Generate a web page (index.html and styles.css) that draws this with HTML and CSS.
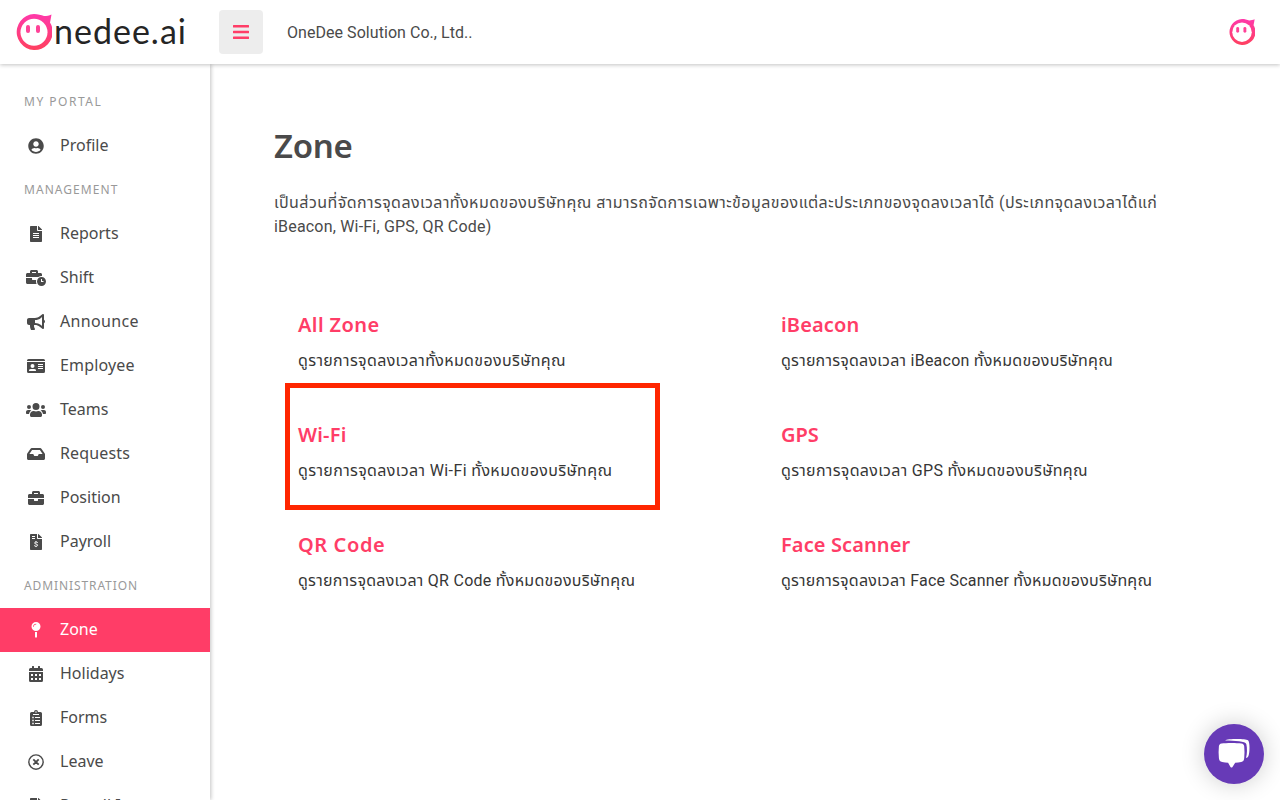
FILE: index.html
```html
<!DOCTYPE html>
<html lang="th">
<head>
<meta charset="utf-8">
<title>Zone</title>
<link rel="stylesheet" href="styles.css">
</head>
<body>
<svg class="defs" width="0" height="0">
  <defs>
    <linearGradient id="pink" x1="0" y1="0" x2="0" y2="1"><stop offset="0" stop-color="#ff39aa"/><stop offset="1" stop-color="#ff405f"/></linearGradient>
    <symbol id="mascot" viewBox="0 0 36 36">
      <path fill="url(#pink)" d="M18 0c4 0 7 1 10 2 3 0 5-.5 7.500-1.500-.5 3-.8 5-1.500 8A18 18 0 1 1 18 0z"/>
      <circle cx="18" cy="18.300" r="13.500" fill="#fff"/>
      <rect x="10" y="11" width="4" height="8" rx="2" fill="#ff4298"/><rect x="20" y="11" width="4" height="8" rx="2" fill="#ff4298"/>
    </symbol>
  </defs>
</svg>
<header class="topbar">
  <a class="logo"><svg class="logo-mark"><use href="#mascot"/></svg><span class="logo-text">nedee.ai</span></a>
  <button class="toggle"><svg width="16" height="14" viewBox="0 0 16 14"><path fill="#ff3d67" d="M.5 0h15q.5 0 .5.5v1.500q0 .5-.5.5H.5Q0 2.500 0 2V.5Q0 0 .5 0zM.5 5.700h15q.5 0 .5.5v1.500q0 .5-.5.5H.5Q0 8.200 0 7.700V6.200q0-.5.5-.5zM.5 11.400h15q.5 0 .5.5v1.500q0 .5-.5.5H.5q-.5 0-.5-.5v-1.500q0-.5.5-.5z"/></svg></button>
  <span class="company">OneDee Solution Co., Ltd..</span>
  <svg class="avatar"><use href="#mascot"/></svg>
</header>
<div class="shell">
  <nav class="sidebar">
    <h2 class="group g1">MY PORTAL</h2>
    <a class="item"><svg viewBox="0 0 496 512"><path d="M248 8C111 8 0 119 0 256s111 248 248 248 248-111 248-248S385 8 248 8zm0 96c48.600 0 88 39.400 88 88s-39.400 88-88 88-88-39.400-88-88 39.400-88 88-88zm0 344c-58.700 0-111.300-26.600-146.500-68.200 18.800-35.400 55.600-59.800 98.500-59.800 2.400 0 4.800.4 7.100 1.100 13 4.200 26.600 6.900 40.900 6.900s28-2.700 40.900-6.900c2.300-.7 4.700-1.100 7.100-1.100 42.900 0 79.700 24.400 98.500 59.800C359.300 421.400 306.700 448 248 448z"/></svg><span>Profile</span></a>
    <h2 class="group g2">MANAGEMENT</h2>
    <a class="item"><svg viewBox="0 0 384 512"><path d="M224 136V0H24C10.700 0 0 10.700 0 24v464c0 13.300 10.700 24 24 24h336c13.300 0 24-10.700 24-24V160H248c-13.200 0-24-10.800-24-24zm64 248H96v-32h192zm0-64H96v-32h192zm0-64H96v-32h192zm96-134v6H256V0h6c6 0 12 2 17 7l98 98c4 4 7 10 7 17z"/></svg><span>Reports</span></a>
    <a class="item"><svg viewBox="0 0 640 512"><path d="M496 224c-79.590 0-144 64.410-144 144s64.410 144 144 144 144-64.410 144-144-64.410-144-144-144zm64 150.290c0 5.340-4.370 9.710-9.710 9.710h-60.570c-5.340 0-9.710-4.370-9.710-9.710v-76.570c0-5.340 4.370-9.710 9.710-9.710h12.570c5.340 0 9.710 4.370 9.710 9.710V352h38.290c5.340 0 9.710 4.370 9.710 9.710zM496 192c5.400 0 10.720.33 16 .81V144c0-25.600-22.400-48-48-48h-80V48c0-25.600-22.400-48-48-48H176c-25.600 0-48 22.400-48 48v48H48c-25.600 0-48 22.400-48 48v80h395.120c28.600-20.090 63.350-32 100.880-32zM320 96H192V64h128zm6.820 224H208c-8.840 0-16-7.160-16-16v-48H0v144c0 25.600 22.400 48 48 48h291.430C327.100 423.960 320 396.820 320 368c0-16.660 2.480-32.720 6.820-48z"/></svg><span>Shift</span></a>
    <a class="item"><svg viewBox="0 0 576 512"><path d="M576 240c0-23.630-12.950-44.040-32-55.120V32.010C544 23.260 537.020 0 512 0c-7.120 0-14.190 2.380-19.980 7.020l-85.030 68.030C364.280 109.190 310.660 128 256 128H64c-35.350 0-64 28.650-64 64v96c0 35.350 28.650 64 64 64h33.700c-1.390 10.480-2.180 21.140-2.180 32 0 39.770 9.260 77.350 25.560 110.940 5.190 10.690 16.520 17.060 28.400 17.060h74.280c26.050 0 41.690-29.840 25.900-50.560-16.400-21.520-26.150-48.360-26.150-77.440 0-11.110 1.620-21.790 4.410-32H256c54.660 0 108.280 18.810 150.980 52.950l85.030 68.030a32 32 0 0 0 19.980 7.020c24.920 0 32-22.780 32-32V295.130C563.050 284.040 576 263.630 576 240zm-96 141.420l-33.050-26.440C392.950 311.780 325.120 288 256 288v-96c69.120 0 136.950-23.780 190.950-66.980L480 98.580z"/></svg><span class="w3">Announce</span></a>
    <a class="item"><svg viewBox="0 0 576 512"><path fill-rule="evenodd" d="M48 32h480q48 0 48 48v16H0V80q0-48 48-48zM0 128h576v304q0 48-48 48H48q-48 0-48-48zM176 192a64 64 0 1 0 0 128 64 64 0 1 0 0-128zM64 416h224v-19q0-45-67-45h-90q-67 0-67 45zM352 192h160v32H352zm0 64h160v32H352zm0 64h160v32H352z"/></svg><span class="w1">Employee</span></a>
    <a class="item"><svg viewBox="0 0 640 512"><path d="M96 224a64 64 0 1 0 0-128 64 64 0 0 0 0 128zm448 0a64 64 0 1 0 0-128 64 64 0 0 0 0 128zm32 32h-64c-17.600 0-33.500 7.100-45.100 18.600 40.300 22.100 68.900 62 75.100 109.400h66c17.700 0 32-14.300 32-32v-32c0-35.300-28.700-64-64-64zm-256 0a112 112 0 1 0 0-224 112 112 0 0 0 0 224zm76.800 32h-8.300c-42 21-95 21-137 0h-8.300C179.600 288 128 339.600 128 403.200V432c0 26.500 21.500 48 48 48h288c26.500 0 48-21.500 48-48v-28.800c0-63.600-51.600-115.200-115.200-115.200zm-223.700-13.400C161.500 263.100 145.600 256 128 256H64c-35.300 0-64 28.700-64 64v32c0 17.700 14.300 32 32 32h65.900c6.300-47.400 34.900-87.300 75.200-109.400z"/></svg><span>Teams</span></a>
    <a class="item"><svg viewBox="0 0 576 512"><path d="M567.900 243.900L462.200 85.400A48 48 0 0 0 422.300 64H153.700a48 48 0 0 0-40 21.400L8 243.900a48 48 0 0 0-8 26.600V400c0 26.500 21.500 48 48 48h480c26.500 0 48-21.500 48-48V270.500a48 48 0 0 0-8.100-26.600zM162.200 128h251.500l85.300 128H376l-32 64H232l-32-64H76.900z"/></svg><span class="w1">Requests</span></a>
    <a class="item"><svg viewBox="0 0 512 512"><path d="M320 336c0 8.840-7.160 16-16 16h-96c-8.840 0-16-7.160-16-16v-48H0v144c0 25.600 22.400 48 48 48h416c25.600 0 48-22.400 48-48V288H320zm144-208h-80V80c0-25.600-22.400-48-48-48H176c-25.600 0-48 22.400-48 48v48H48c-25.600 0-48 22.400-48 48v80h512v-80c0-25.600-22.400-48-48-48zm-144 0H192V96h128z"/></svg><span>Position</span></a>
    <a class="item"><svg viewBox="0 0 384 512"><path fill-rule="evenodd" d="M224 136V0H24Q0 0 0 24v464q0 24 24 24h336q24 0 24-24V160H248q-24 0-24-24zM64 64h96v32H64zm0 64h96v32H64zM384 122v6H256V0q15 0 23 7l98 98q7 7 7 17z"/><path d="M248 275c-32-26-101-25-101 14 0 46 96 19 96 67 0 43-70 46-108 14M192 228v34m0 122v34" fill="none" stroke="#fff" stroke-width="32"/></svg><span>Payroll</span></a>
    <h2 class="group g3">ADMINISTRATION</h2>
    <a class="item active"><svg viewBox="0 0 288 512"><path d="M112 316.940v156.690l22 33c4.750 7.120 15.220 7.120 20 0l22-33V316.940a176 176 0 0 1-64 0zM144 0a144 144 0 1 0 0 288 144 144 0 0 0 0-288zm0 76c-37.500 0-68 30.500-68 68 0 6.620-5.380 12-12 12s-12-5.380-12-12c0-50.730 41.280-92 92-92 6.620 0 12 5.380 12 12s-5.380 12-12 12z"/></svg><span>Zone</span></a>
    <a class="item"><svg viewBox="0 0 448 512"><path fill-rule="evenodd" d="M0 192h448v272q0 48-48 48H48q-48 0-48-48zM64 256v64h64v-64zm128 0v64h64v-64zm128 0v64h64v-64zM64 384v64h64v-64zm128 0v64h64v-64zm128 0v64h64v-64zM448 160H0v-48q0-48 48-48h48V12q0-12 12-12h40q12 0 12 12v52h128V12q0-12 12-12h40q12 0 12 12v52h48q48 0 48 48z"/></svg><span>Holidays</span></a>
    <a class="item"><svg viewBox="0 0 384 512"><path fill-rule="evenodd" d="M336 64h-80a64 64 0 0 0-128 0H48Q0 64 0 112v352q0 48 48 48h288q48 0 48-48V112q0-48-48-48zM192 40a24 24 0 1 1 0 48 24 24 0 0 1 0-48zM96 128h192v32H96zM72 216h48v48H72zm88 8h160v32H160zM72 312h48v48H72zm88 8h160v32H160zM72 408h48v48H72zm88 8h160v32H160z"/></svg><span>Forms</span></a>
    <a class="item"><svg viewBox="0 0 512 512"><g fill="none" stroke="#4a4a4a" stroke-width="46"><circle cx="256" cy="256" r="229"/><path stroke-width="58" d="M170 170l172 172m0-172L170 342"/></g></svg><span>Leave</span></a>
    <a class="item"><svg viewBox="0 0 384 512"><path d="M224 136V0H24Q0 0 0 24v464q0 24 24 24h336q24 0 24-24V160H248q-24 0-24-24zm160-14v6H256V0q15 0 23 7l98 98q7 7 7 17z"/></svg><span>Payroll Item</span></a>
  </nav>
  <main class="content">
    <h1>Zone</h1>
    <p class="intro"><span class="i1">เป็นส่วนที่จัดการจุดลงเวลาทั้งหมดของบริษัทคุณ สามารถจัดการเฉพาะข้อมูลของแต่ละประเภทของจุดลงเวลาได้ (ประเภทจุดลงเวลาได้แก่</span><br><span class="i2">iBeacon, Wi-Fi, GPS, QR Code)</span></p>
    <div class="zones">
      <section class="card all"><h3>All Zone</h3><p>ดูรายการจุดลงเวลาทั้งหมดของบริษัทคุณ</p></section>
      <section class="card beacon"><h3>iBeacon</h3><p>ดูรายการจุดลงเวลา iBeacon ทั้งหมดของบริษัทคุณ</p></section>
      <section class="card wifi marked"><h3>Wi-Fi</h3><p>ดูรายการจุดลงเวลา Wi-Fi ทั้งหมดของบริษัทคุณ</p></section>
      <section class="card gps"><h3>GPS</h3><p>ดูรายการจุดลงเวลา GPS ทั้งหมดของบริษัทคุณ</p></section>
      <section class="card qr"><h3>QR Code</h3><p>ดูรายการจุดลงเวลา QR Code ทั้งหมดของบริษัทคุณ</p></section>
      <section class="card face"><h3>Face Scanner</h3><p>ดูรายการจุดลงเวลา Face Scanner ทั้งหมดของบริษัทคุณ</p></section>
    </div>
  </main>
</div>
<button class="chat"><svg width="34" height="32" viewBox="0 0 34 32"><path fill="#fff" d="M8 2.500C10 .7 28 .5 31 2.200c2 1.500 2 13 .2 16.300-.4.8-1.200 1.200-2.200 1.400 1.200-4 1.300-10 .3-14C28.500 3.300 18 2.800 8 2.500zM4.500 5.500c5-.8 15-.8 20 0 1.700.3 2.500 1.200 2.700 2.800.4 4 .4 8 0 12-.2 2.500-1.200 3.400-3 3.700-2 .4-4 .6-6 .7L15.500 29q-1 1-2 0l-2.400-4.300c-2-.1-4-.3-6-.7-1.900-.3-2.900-1.200-3.200-3.700-.4-4-.4-8 0-12 .2-1.600 1-2.500 2.600-2.800z"/></svg></button>
</body>
</html>
```
FILE: styles.css
```css
*, *::after { box-sizing: border-box; }
body { margin: 0; height: 800px; overflow: hidden; background: #fff; color: #4a4a4a; font: 16px/24px Roboto, "Noto Sans Thai", "Noto Sans", sans-serif; }
.defs { position: absolute; }
h1, h2, h3, p { margin: 0; }
button { border: 0; padding: 0; display: flex; align-items: center; justify-content: center; }
.topbar { position: relative; z-index: 2; height: 64px; padding: 0 25px 0 16px; display: flex; align-items: center; background: #fff; box-shadow: 0 1px 4px rgba(0, 0, 0, .24); }
.logo { width: 203px; display: flex; }
.logo-mark { flex: none; width: 36px; height: 36px; }
.logo-text { margin: -1px 0 1px 2px; font: 34px/36px Lato, sans-serif; color: #252525; white-space: nowrap; letter-spacing: 1px; }
.toggle { width: 44px; height: 44px; border-radius: 4px; background: #ededed; }
.company { margin-left: 24px; padding-top: 2px; letter-spacing: .05px; }
.avatar { width: 26px; height: 26px; margin: 0 0 1px auto; }
.shell { display: flex; height: 736px; }
.sidebar { width: 210px; flex: none; padding-top: 16px; box-shadow: 1px 0 4px rgba(0, 0, 0, .24); font-family: "Noto Sans", sans-serif; }
.group { height: 44px; padding-left: 24px; font-size: 12px; line-height: 44px; font-weight: 400; color: #999; }
.g1 { letter-spacing: 1.500px; }
.g2 { letter-spacing: 1.050px; }
.g3 { letter-spacing: .9px; }
.item { height: 44px; display: flex; align-items: center; padding-left: 24px; gap: 12px; }
.item svg { width: 24px; height: 16px; fill: #4a4a4a; }
.item span { padding-bottom: 2px; white-space: nowrap; }
.w1 { letter-spacing: .15px; }
.w3 { letter-spacing: .35px; }
.active { background: #ff3d67; color: #fff; }
.active svg { fill: #fff; }
.content { width: 966px; padding: 62px 0 0 64px; }
h1 { font: 600 33px/40px "Noto Sans", sans-serif; letter-spacing: -.3px; }
.intro { margin-top: 25px; white-space: nowrap; }
.i1 { letter-spacing: .44px; }
.i2 { letter-spacing: .19px; }
.zones { margin-top: 48px; display: grid; grid-template-columns: 483px 483px; grid-auto-rows: 110px; }
.card { position: relative; padding: 27px 24px 0; color: #363636; white-space: nowrap; }
.card h3 { font: 600 20px/22px "Noto Sans", sans-serif; color: #ff3d67; margin-bottom: 13px; }
.all h3 { letter-spacing: .4px; }
.all p { letter-spacing: .36px; }
.beacon h3 { letter-spacing: .15px; }
.beacon p { letter-spacing: .24px; }
.wifi h3 { letter-spacing: .2px; }
.wifi p { letter-spacing: .38px; }
.gps p { letter-spacing: .32px; }
.qr h3 { letter-spacing: .6px; }
.qr p { letter-spacing: .26px; }
.face h3 { letter-spacing: .1px; }
.face p { letter-spacing: .22px; }
/* highlight frame drawn around the Wi-Fi card */
.marked::after { content: ""; position: absolute; left: 11px; top: -14px; width: 375px; height: 127px; border: 5px solid #ff2600; }
.chat { position: fixed; right: 16px; bottom: 16px; width: 60px; height: 60px; border-radius: 50%; background: #673ab7; box-shadow: 0 0 24px rgba(0, 0, 0, .2); }
```
